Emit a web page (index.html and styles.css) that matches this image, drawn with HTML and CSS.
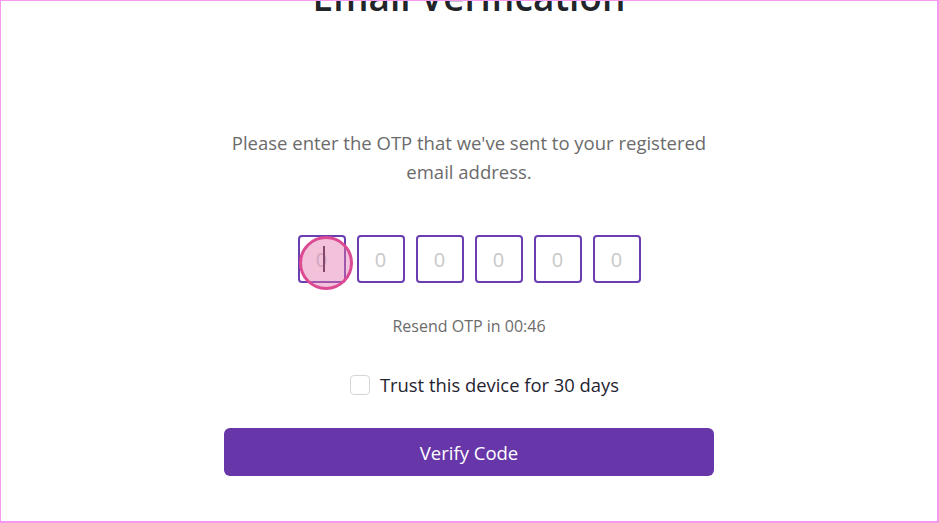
FILE: index.html
```html
<!DOCTYPE html>
<html>
<head>
<meta charset="utf-8">
<link rel="stylesheet" href="styles.css">
</head>
<body>
<div class="frame">
  <div class="card">
    <h1 class="title">Email Verification</h1>
    <p class="lead">Please enter the OTP that we've sent to your registered email address.</p>
    <div class="otp">
      <div class="box active"><span class="digit">0</span><span class="caret"></span><span class="tap"></span></div>
      <div class="box"><span class="digit">0</span></div>
      <div class="box"><span class="digit">0</span></div>
      <div class="box"><span class="digit">0</span></div>
      <div class="box"><span class="digit">0</span></div>
      <div class="box"><span class="digit">0</span></div>
    </div>
    <div class="resend">Resend OTP in 00:46</div>
    <label class="trust"><span class="check"></span><span>Trust this device for 30 days</span></label>
    <button class="verify">Verify Code</button>
  </div>
</div>
</body>
</html>
```
FILE: styles.css
```css
* { box-sizing: border-box; }
html, body { margin: 0; padding: 0; background: #fff; }
body { font-family: "Open Sans", "Noto Sans", sans-serif; }
.frame {
  width: 939px;
  height: 523px;
  border: 1px solid #f59af0;
  border-right-width: 2px;
  border-bottom-width: 2px;
  overflow: hidden;
  display: flex;
  justify-content: center;
}
.card {
  width: 490px;
  display: flex;
  flex-direction: column;
  align-items: center;
}
.title {
  margin: -26px 0 0;
  font-size: 37px;
  line-height: 44px;
  font-weight: 600;
  color: #212529;
  white-space: nowrap;
}
.lead {
  margin: 109px 0 0;
  width: 480px;
  text-align: center;
  font-size: 18.5px;
  line-height: 29px;
  color: #6b6b6b;
}
.otp {
  margin-top: 49px;
  display: flex;
  gap: 11px;
}
.box {
  position: relative;
  width: 48px;
  height: 48px;
  border: 2px solid #6a3eb0;
  border-radius: 4px;
  display: flex;
  align-items: center;
  justify-content: center;
}
.digit {
  font-size: 20px;
  color: #c8c8c8;
}
.caret {
  position: absolute;
  left: 23px;
  top: 9px;
  width: 2px;
  height: 26px;
  background: #3a2030;
}
.tap {
  position: absolute;
  left: -1px;
  top: -1px;
  width: 54px;
  height: 54px;
  border-radius: 50%;
  border: 3px solid #db4a93;
  background: rgba(226, 120, 176, 0.45);
}
.resend {
  margin-top: 32px;
  font-size: 16px;
  line-height: 22px;
  color: #6c6c6c;
}
.trust {
  margin-top: 36px;
  margin-left: 31px;
  display: flex;
  align-items: center;
  gap: 10px;
  font-size: 18.4px;
  line-height: 24px;
  color: #1f2430;
}
.check {
  width: 20px;
  height: 20px;
  border: 1px solid #d6d6d6;
  border-radius: 4px;
  background: #fff;
}
.verify {
  margin-top: 31px;
  width: 490px;
  height: 48px;
  border: none;
  border-radius: 6px;
  background: #6737a9;
  color: #fff;
  font-family: inherit;
  font-size: 18.5px;
}
```
